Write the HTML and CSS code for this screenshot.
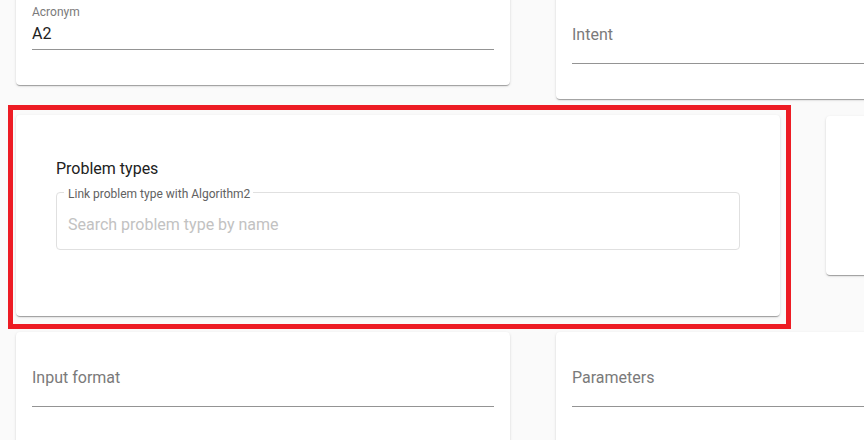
FILE: index.html
```html
<!DOCTYPE html>
<html lang="en">
<head>
<meta charset="utf-8">
<title>Algorithm2</title>
<link rel="stylesheet" href="styles.css">
</head>
<body>
<div class="page">
  <div class="row row-top">
    <div class="card card-acronym">
      <div class="field filled">
        <div class="field-label">Acronym</div>
        <div class="field-value">A2</div>
      </div>
    </div>
    <div class="card card-intent">
      <div class="field empty">
        <div class="field-input">Intent</div>
      </div>
    </div>
  </div>

  <div class="row row-mid">
    <div class="highlight">
      <div class="card card-problem">
        <div class="section-title">Problem types</div>
        <fieldset class="outlined">
          <legend class="outlined-label">Link problem type with Algorithm2</legend>
          <div class="outlined-placeholder">Search problem type by name</div>
        </fieldset>
      </div>
    </div>
    <div class="card card-side"></div>
  </div>

  <div class="row row-bottom">
    <div class="card card-low">
      <div class="field empty">
        <div class="field-input">Input format</div>
      </div>
    </div>
    <div class="card card-low">
      <div class="field empty">
        <div class="field-input">Parameters</div>
      </div>
    </div>
  </div>
</div>
</body>
</html>
```

FILE: styles.css
```css
html, body {
  margin: 0;
  padding: 0;
  background: #fafafa;
  overflow: hidden;
  width: 864px;
  height: 440px;
}

body {
  font-family: Roboto, "Liberation Sans", Arial, sans-serif;
  color: #212121;
}

.page {
  display: flex;
  flex-direction: column;
  gap: 16px;
  padding-left: 16px;
  margin-top: -20px;
}

.row {
  display: flex;
  gap: 46px;
  align-items: flex-start;
}

.card {
  flex-shrink: 0;
  box-sizing: border-box;
  background: #ffffff;
  border-radius: 4px;
  box-shadow: 0 2px 1px -1px rgba(0, 0, 0, 0.2),
              0 1px 1px 0 rgba(0, 0, 0, 0.14),
              0 1px 3px 0 rgba(0, 0, 0, 0.12);
}

/* top row */
.card-acronym {
  width: 494px;
  padding: 25px 16px 35px;
}

.card-intent {
  width: 494px;
  padding: 45px 16px 35px;
}

.field {
  border-bottom: 1px solid #949494;
}

.field-label {
  font-size: 12px;
  line-height: 14px;
  color: #7a7a7a;
}

.field-value {
  margin-top: 5px;
  padding-bottom: 6px;
  font-size: 16px;
  line-height: 19px;
  color: #212121;
}

.field-input {
  padding-bottom: 19px;
  font-size: 16px;
  line-height: 19px;
  color: #7a7a7a;
}

/* middle row */
.highlight {
  position: relative;
  flex-shrink: 0;
}

.highlight::after {
  content: "";
  position: absolute;
  top: -10px;
  right: -11px;
  bottom: -13px;
  left: -8px;
  border: 5px solid #ed1c24;
  pointer-events: none;
}

.card-problem {
  width: 764px;
  height: 201px;
  padding: 44px 40px 0;
}

.section-title {
  font-size: 16px;
  line-height: 19px;
  color: #212121;
}

.outlined {
  margin: 7px 0 0;
  padding: 16px 11px 15px;
  border: 1px solid #e0e0e0;
  border-radius: 4px;
  min-width: 0;
}

.outlined-label {
  position: relative;
  top: 2px;
  margin-left: -4px;
  padding: 0 3px 0 4px;
  font-size: 12px;
  line-height: 14px;
  color: #616161;
}

.outlined-placeholder {
  font-size: 16px;
  line-height: 19px;
  color: #c2c2c2;
}

.card-side {
  width: 494px;
  height: 159px;
  margin-top: 1px;
}

/* bottom row */
.card-low {
  width: 494px;
  height: 200px;
  padding: 36px 16px 0;
}
```
